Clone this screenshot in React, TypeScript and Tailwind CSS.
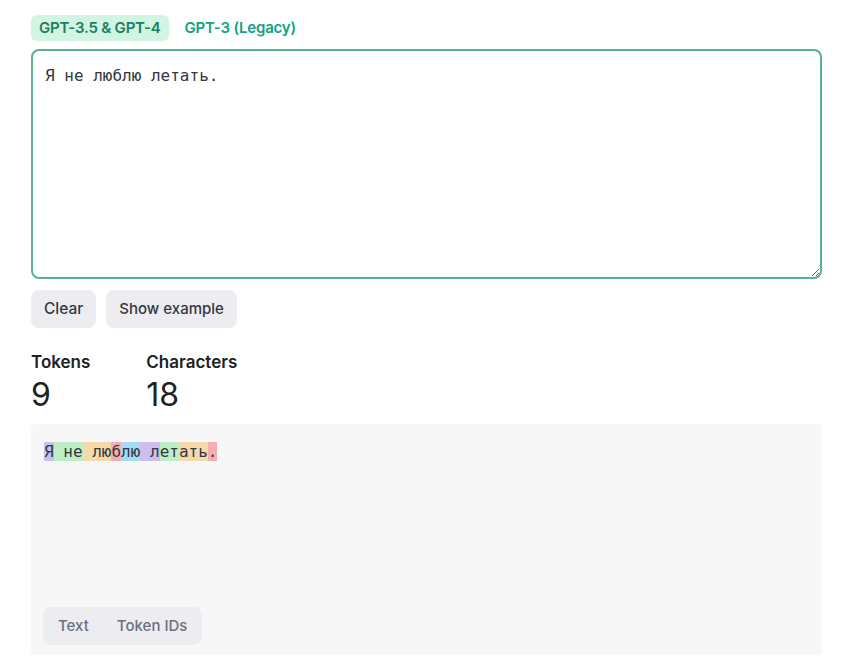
import React from "react";

const tokens: { t: string; c: string }[] = [
  { t: "Я", c: "bg-[rgba(107,64,216,0.3)]" },
  { t: " не", c: "bg-[rgba(104,222,122,0.4)]" },
  { t: " лю", c: "bg-[rgba(244,172,54,0.4)]" },
  { t: "б", c: "bg-[rgba(239,65,70,0.4)]" },
  { t: "лю", c: "bg-[rgba(39,181,234,0.4)]" },
  { t: " л", c: "bg-[rgba(107,64,216,0.3)]" },
  { t: "ет", c: "bg-[rgba(104,222,122,0.4)]" },
  { t: "ать", c: "bg-[rgba(244,172,54,0.4)]" },
  { t: ".", c: "bg-[rgba(239,65,70,0.4)]" },
];

export default function App() {
  return (
    <div className="min-h-[665px] w-[850px] bg-white font-['Inter','Liberation_Sans',sans-serif] text-[#202123]">
      <div className="ml-[31px] flex w-[791px] flex-col pt-[15px]">
        <div className="flex items-center gap-[8px]">
          <button className="h-[26px] rounded-[6px] bg-[#d2f4e3] px-[8px] text-[15px] font-semibold tracking-[-0.2px] text-[#1a7f64]">
            GPT-3.5 &amp; GPT-4
          </button>
          <button className="h-[26px] rounded-[6px] px-[8px] text-[15px] font-semibold tracking-[-0.2px] text-[#10a37f]">
            GPT-3 (Legacy)
          </button>
        </div>
        <textarea
          readOnly
          value="Я не люблю летать."
          className="mt-[8px] h-[230px] w-full rounded-[8px] border-2 border-[#5bb196] px-[12px] py-[14px] font-['DejaVu_Sans_Mono',monospace] text-[16px] leading-[22px] text-[#353740] outline-none"
        />
        <div className="mt-[11px] flex gap-[10px]">
          <button className="h-[38px] rounded-[8px] bg-[#ececf1] px-[13px] text-[15.5px] font-medium text-[#353740]">
            Clear
          </button>
          <button className="h-[38px] rounded-[8px] bg-[#ececf1] px-[13px] text-[15px] font-medium text-[#353740]">
            Show example
          </button>
        </div>
        <div className="mt-[24px] flex gap-[56px]">
          <div className="flex flex-col">
            <div className="text-[17px] font-semibold leading-[20px]">Tokens</div>
            <div className="mt-[5px] text-[32px] leading-[36px]">9</div>
          </div>
          <div className="flex flex-col">
            <div className="text-[17px] font-semibold leading-[20px]">Characters</div>
            <div className="mt-[5px] text-[32px] leading-[36px]">18</div>
          </div>
        </div>
        <div className="mt-[11px] flex h-[231px] flex-col justify-between rounded-[4px] bg-[#f7f7f8] px-[12px] pb-[10px] pt-[17px]">
          <div className="whitespace-pre px-[1px] font-['DejaVu_Sans_Mono',monospace] text-[16px] leading-[22px] text-[#353740]">
            {tokens.map((k, i) => (
              <span key={i} className={k.c}>
                {k.t}
              </span>
            ))}
          </div>
          <div className="flex w-fit items-center rounded-[8px] bg-[#ececf1] px-[4px] py-[4px]">
            <button className="h-[30px] rounded-[6px] px-[11px] text-[15px] font-medium text-[#6e6e80]">
              Text
            </button>
            <button className="ml-[6px] h-[30px] rounded-[6px] px-[11px] text-[15px] font-medium text-[#6e6e80]">
              Token IDs
            </button>
          </div>
        </div>
      </div>
    </div>
  );
}
